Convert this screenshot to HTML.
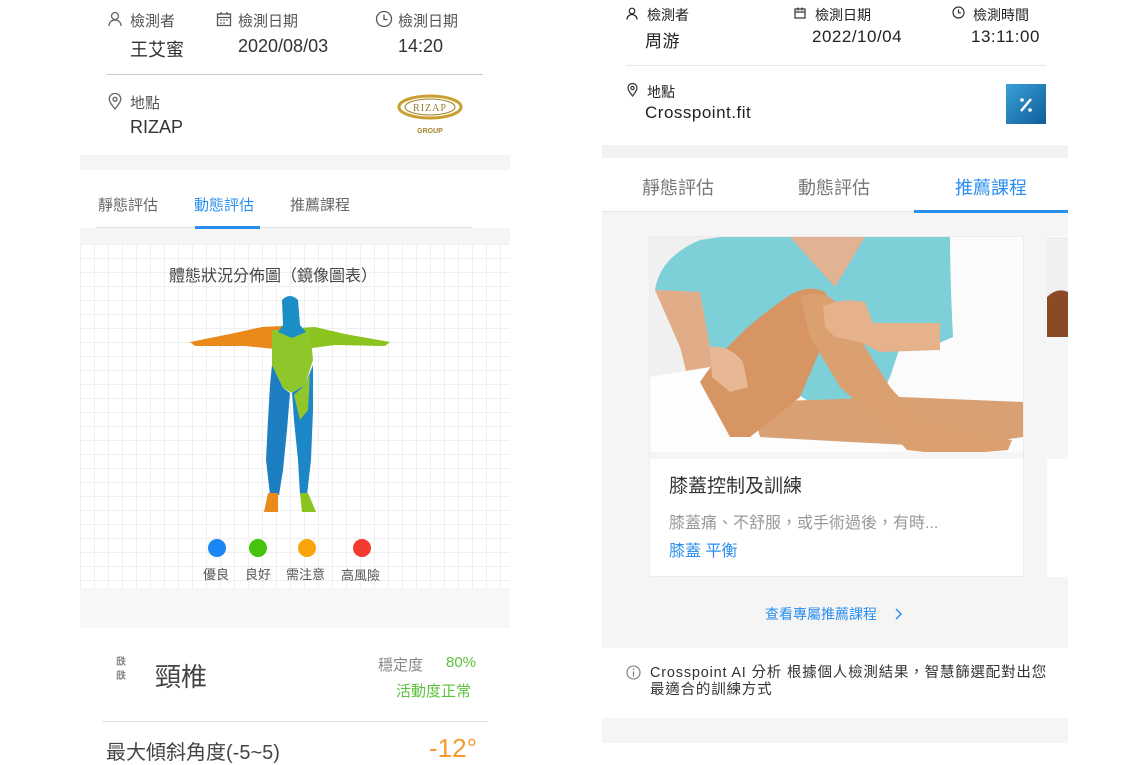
<!DOCTYPE html>
<html><head><meta charset="utf-8"><style>
*{margin:0;padding:0;box-sizing:border-box}
body{width:1130px;height:756px;background:#fff;position:relative;overflow:hidden;font-family:"Liberation Sans","Noto Sans CJK TC",sans-serif;color:#333}
.a{position:absolute;white-space:nowrap}
.lab{font-size:15px;color:#555}
.val{font-size:18px;color:#333}
.rl{font-size:14px;color:#222}
.rv{font-size:17px;color:#222;letter-spacing:.5px}
svg{position:absolute}
</style></head><body>

<!-- LEFT PANEL -->
<div class="a" style="left:80px;top:155px;width:430px;height:15px;background:#f5f5f5"></div>
<div class="a" style="left:80px;top:228px;width:430px;height:16px;background:#f6f6f6"></div>
<div class="a" style="left:80px;top:244px;width:430px;height:344px;background-color:#fff;background-image:linear-gradient(#efefef 1px,transparent 1px),linear-gradient(90deg,#efefef 1px,transparent 1px);background-size:14px 14px"></div>
<div class="a" style="left:80px;top:588px;width:430px;height:40px;background:#f7f7f7"></div>

<svg style="left:107px;top:11px" width="16" height="16" viewBox="0 0 16 16"><circle cx="8" cy="5" r="3.5" fill="none" stroke="#666" stroke-width="1.3"/><path d="M2 15c0-4 3-6 6-6s6 2 6 6" fill="none" stroke="#666" stroke-width="1.3"/></svg>
<div class="a lab" style="left:130px;top:10px">檢測者</div>
<svg style="left:216px;top:11px" width="16" height="16" viewBox="0 0 16 16"><rect x="1.5" y="3" width="13" height="11.5" fill="none" stroke="#555" stroke-width="1.3"/><path d="M1.5 6.5h13M5 1v3M11 1v3" stroke="#555" stroke-width="1.3"/><path d="M4 9h2M7 9h2M10 9h2M4 12h2M7 12h2" stroke="#555" stroke-width="1"/></svg>
<div class="a lab" style="left:238px;top:10px">檢測日期</div>
<svg style="left:375px;top:10px" width="18" height="18" viewBox="0 0 18 18"><circle cx="9" cy="9" r="7.5" fill="none" stroke="#555" stroke-width="1.3"/><path d="M9 4.5V9.5H12.5" fill="none" stroke="#555" stroke-width="1.3"/></svg>
<div class="a lab" style="left:398px;top:10px">檢測日期</div>
<div class="a val" style="left:130px;top:36px">王艾蜜</div>
<div class="a val" style="left:238px;top:36px">2020/08/03</div>
<div class="a val" style="left:398px;top:36px">14:20</div>
<div class="a" style="left:107px;top:74px;width:376px;height:1px;background:#c8c8c8"></div>
<svg style="left:108px;top:93px" width="14" height="17" viewBox="0 0 14 17"><path d="M7 16C3 11 1.2 8.5 1.2 6.2a5.8 5.8 0 0 1 11.6 0C12.8 8.5 11 11 7 16z" fill="none" stroke="#666" stroke-width="1.3"/><circle cx="7" cy="6.3" r="2" fill="none" stroke="#666" stroke-width="1.3"/></svg>
<div class="a lab" style="left:130px;top:92px">地點</div>
<div class="a val" style="left:130px;top:117px">RIZAP</div>
<svg style="left:396px;top:93px" width="68" height="44" viewBox="0 0 68 44"><ellipse cx="34" cy="14" rx="31" ry="11" fill="none" stroke="#c9a030" stroke-width="3"/><ellipse cx="34" cy="14" rx="25" ry="8" fill="#fff" stroke="#a58024" stroke-width="1"/><text x="34" y="18" font-size="10" text-anchor="middle" fill="#9b7a2a" font-family="Liberation Serif,serif" letter-spacing="1">RIZAP</text><text x="34" y="40" font-size="7" text-anchor="middle" fill="#a8862e" font-weight="bold" font-family="Liberation Sans,sans-serif">GROUP</text></svg>

<div class="a" style="left:98px;top:194px;font-size:15px;color:#666">靜態評估</div>
<div class="a" style="left:194px;top:194px;font-size:15px;color:#2b8ff0">動態評估</div>
<div class="a" style="left:290px;top:194px;font-size:15px;color:#666">推薦課程</div>
<div class="a" style="left:96px;top:227px;width:376px;height:1px;background:#e0e0e0"></div>
<div class="a" style="left:195px;top:226px;width:65px;height:3px;background:#2b8ff0"></div>

<div class="a" style="left:169px;top:262px;font-size:16px;color:#444">體態狀況分佈圖（鏡像圖表）</div>
<svg style="left:185px;top:290px" width="210" height="225" viewBox="185 290 210 225">
 <path d="M190 342 L230 334 L262 327 L282 326 L287 340 L275 349 L245 346 L195 346 Z" fill="#e98a1a"/>
 <path d="M390 342 L345 334 L315 327 L297 328 L295 340 L305 349 L335 345 L385 346 Z" fill="#8bc41f"/>
 <path d="M272 330 L310 330 L313 360 L305 385 L292 393 L283 388 L272 365 Z" fill="#8fc62a"/>
 <path d="M282 300 Q290 292 298 300 L300 325 L306 332 L292 338 L278 332 L283 325 Z" fill="#1b8fc5"/>
 <path d="M272 365 L283 388 L290 393 L287 430 L283 470 L279 495 L270 495 L266 460 L268 420 L270 385 Z" fill="#1d7fc2"/>
 <path d="M292 393 L305 385 L313 365 L313 410 L311 460 L307 495 L300 495 L298 460 L294 420 Z" fill="#1d86c6"/>
 <path d="M294 395 L305 385 L310 375 L308 410 L300 420 Z" fill="#8fc62a"/>
 <path d="M268 493 L278 493 L278 512 L264 512 Z" fill="#e98a1a"/>
 <path d="M300 493 L308 493 L316 512 L302 512 Z" fill="#8bc41f"/>
</svg>
<div class="a" style="left:208px;top:539px;width:18px;height:18px;border-radius:50%;background:#1a87f5"></div>
<div class="a" style="left:249px;top:539px;width:18px;height:18px;border-radius:50%;background:#44c40c"></div>
<div class="a" style="left:298px;top:539px;width:18px;height:18px;border-radius:50%;background:#f9a40a"></div>
<div class="a" style="left:353px;top:539px;width:18px;height:18px;border-radius:50%;background:#f33b32"></div>
<div class="a" style="left:203px;top:564px;font-size:13px;color:#555">優良</div>
<div class="a" style="left:245px;top:564px;font-size:13px;color:#555">良好</div>
<div class="a" style="left:286px;top:564px;font-size:13px;color:#555">需注意</div>
<div class="a" style="left:341px;top:565px;font-size:13px;color:#555">高風險</div>

<div class="a" style="left:116px;top:656px;font-size:10px;line-height:14px;color:#888;font-weight:bold">㲳<br>㲳</div>
<div class="a" style="left:155px;top:657px;font-size:26px;color:#444">頸椎</div>
<div class="a" style="left:378px;top:654px;font-size:15px;color:#888">穩定度</div>
<div class="a" style="left:446px;top:654px;font-size:15px;color:#5cc23a">80%</div>
<div class="a" style="left:396px;top:680px;font-size:15px;color:#5cc23a">活動度正常</div>
<div class="a" style="left:102px;top:721px;width:386px;height:1px;background:#e0e0e0"></div>
<div class="a" style="left:106px;top:736px;font-size:20px;color:#444">最大傾斜角度(-5~5)</div>
<div class="a" style="left:429px;top:733px;font-size:26px;color:#f59a2b">-12°</div>

<!-- RIGHT PANEL -->
<div class="a" style="left:602px;top:145px;width:466px;height:13px;background:#f2f2f2"></div>
<div class="a" style="left:602px;top:212px;width:466px;height:436px;background:#f5f5f5"></div>
<div class="a" style="left:602px;top:718px;width:466px;height:25px;background:#f5f5f5"></div>

<svg style="left:626px;top:7px" width="12" height="13" viewBox="0 0 12 13"><circle cx="6" cy="4" r="2.8" fill="none" stroke="#222" stroke-width="1.2"/><path d="M1 12.5c0-3 2.5-5 5-5s5 2 5 5" fill="none" stroke="#222" stroke-width="1.2"/></svg>
<div class="a rl" style="left:647px;top:5px">檢測者</div>
<svg style="left:794px;top:7px" width="12" height="12" viewBox="0 0 12 12"><rect x="1" y="2" width="10" height="9" fill="none" stroke="#333" stroke-width="1.2"/><path d="M1 5h10M4 0.5v3M8 0.5v3" stroke="#333" stroke-width="1.2"/></svg>
<div class="a rl" style="left:815px;top:5px">檢測日期</div>
<svg style="left:952px;top:6px" width="13" height="13" viewBox="0 0 13 13"><circle cx="6.5" cy="6.5" r="5.5" fill="none" stroke="#333" stroke-width="1.2"/><path d="M6.5 3.5v3.3h2.5" fill="none" stroke="#333" stroke-width="1.2"/></svg>
<div class="a rl" style="left:973px;top:5px">檢測時間</div>
<div class="a rv" style="left:645px;top:27px">周游</div>
<div class="a rv" style="left:812px;top:27px">2022/10/04</div>
<div class="a rv" style="left:971px;top:27px">13:11:00</div>
<div class="a" style="left:626px;top:65px;width:420px;height:1px;background:#e6e6e6"></div>
<svg style="left:627px;top:83px" width="11" height="14" viewBox="0 0 11 14"><path d="M5.5 13C2.5 9 1 7 1 5a4.5 4.5 0 0 1 9 0c0 2-1.5 4-4.5 8z" fill="none" stroke="#333" stroke-width="1.2"/><circle cx="5.5" cy="5" r="1.6" fill="none" stroke="#333" stroke-width="1.2"/></svg>
<div class="a rl" style="left:647px;top:82px">地點</div>
<div class="a rv" style="left:645px;top:103px">Crosspoint.fit</div>
<div class="a" style="left:1006px;top:84px;width:40px;height:40px;background:linear-gradient(135deg,#3aa0d8,#0e5d9a)"></div>
<svg style="left:1006px;top:84px" width="40" height="40" viewBox="0 0 40 40"><path d="M15 27L25 15" stroke="#fff" stroke-width="2.5"/><circle cx="16" cy="16" r="1.8" fill="#fff"/><circle cx="24" cy="26" r="1.8" fill="#fff"/></svg>

<div class="a" style="left:642px;top:174px;font-size:18px;color:#777">靜態評估</div>
<div class="a" style="left:798px;top:174px;font-size:18px;color:#777">動態評估</div>
<div class="a" style="left:955px;top:174px;font-size:18px;color:#2b8ff0">推薦課程</div>
<div class="a" style="left:602px;top:211px;width:466px;height:1px;background:#e6e6e6"></div>
<div class="a" style="left:914px;top:210px;width:154px;height:3px;background:#2b8ff0"></div>

<!-- card -->
<div class="a" style="left:649px;top:236px;width:375px;height:341px;background:#fff;border:1px solid #ececec"></div>
<svg style="left:650px;top:237px" width="373" height="222" viewBox="0 0 373 222">
 <rect width="373" height="222" fill="#fbfbfb"/>
 <rect width="120" height="222" fill="#f0f0f0"/>
 <path d="M5 53 Q10 20 50 3 L70 0 L300 0 Q300 40 303 100 L280 110 L250 110 L240 140 L230 160 L160 165 L120 140 L95 115 L60 110 L50 55 Z" fill="#7dcfd8"/>
 <path d="M140 0 L215 0 L185 50 Z" fill="#e2b392"/>
 <path d="M5 53 L50 55 L60 110 L93 125 L100 145 L80 150 L60 160 L40 150 L30 110 Z" fill="#e1ad88"/>
 <path d="M0 140 L60 130 L120 170 L200 200 L257 215 L257 222 L0 222 Z" fill="#fdfdfd"/>
 <path d="M100 165 L250 160 L373 165 L373 200 L300 210 L200 205 L110 200 Z" fill="#d9a073"/>
 <path d="M50 145 Q80 100 130 65 Q155 45 175 55 Q185 70 180 90 L150 160 L100 200 L80 200 Z" fill="#d69563"/>
 <path d="M150 60 Q175 50 190 70 L240 150 L267 180 L330 198 L362 203 L358 213 L300 218 L257 213 L240 195 L190 150 L160 100 Z" fill="#dba070"/>
 <path d="M173 70 Q190 60 215 65 L223 86 L290 86 L290 113 L230 115 L210 105 L185 100 L175 90 Z" fill="#e6b28c"/>
 <path d="M60 110 Q80 108 93 125 L98 150 L80 155 L62 140 Z" fill="#e8b896"/>
 <rect y="215" width="373" height="7" fill="#f5f5f5"/>
</svg>
<div class="a" style="left:669px;top:471px;font-size:19px;color:#333">膝蓋控制及訓練</div>
<div class="a" style="left:669px;top:509px;font-size:16px;color:#999">膝蓋痛、不舒服，或手術過後，有時...</div>
<div class="a" style="left:669px;top:537px;font-size:16px;color:#2b8ff0">膝蓋 平衡</div>
<div class="a" style="left:1047px;top:236px;width:21px;height:341px;background:#fff"></div>
<svg style="left:1047px;top:237px" width="21" height="222"><rect width="21" height="222" fill="#eef0f2"/><path d="M0 60 Q10 50 21 55 L21 100 L0 100 Z" fill="#8a4a25"/><rect y="100" width="21" height="122" fill="#f5f6f8"/></svg>

<div class="a" style="left:765px;top:604px;font-size:14px;color:#2b8ff0">查看專屬推薦課程</div>
<svg style="left:894px;top:607px" width="10" height="14" viewBox="0 0 10 14"><path d="M2 2l5 5-5 5" fill="none" stroke="#2b8ff0" stroke-width="1.5"/></svg>

<svg style="left:626px;top:665px" width="15" height="15" viewBox="0 0 15 15"><circle cx="7.5" cy="7.5" r="6.5" fill="none" stroke="#777" stroke-width="1.1"/><path d="M7.5 6.5v5" stroke="#777" stroke-width="1.2"/><circle cx="7.5" cy="4.2" r=".8" fill="#777"/></svg>
<div class="a" style="left:650px;top:665px;font-size:14.5px;line-height:17px;color:#333;letter-spacing:.8px">Crosspoint AI 分析 根據個人檢測結果，智慧篩選配對出您<br>最適合的訓練方式</div>
</body></html>
